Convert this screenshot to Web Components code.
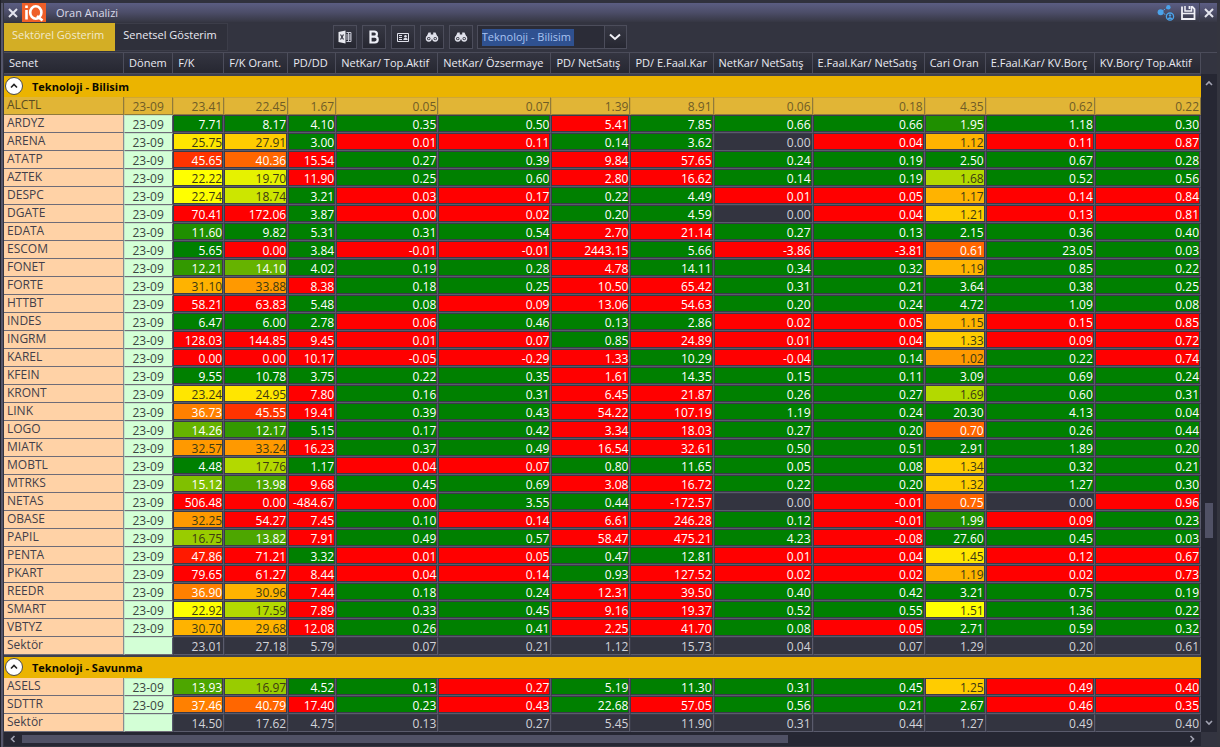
<!DOCTYPE html>
<html lang="tr">
<head>
<meta charset="utf-8">
<title>Oran Analizi</title>
<style>
  html { background: #24252f; }
  body { margin: 0; min-height: 100vh; font: 11px/16px "Open Sans", "Noto Sans", sans-serif; color: #e9eaf2; }
</style>
</head>
<body>
<app-window>
  <title-bar slot="title">Oran Analizi</title-bar>
  <tool-bar slot="tools">
    <tab-button slot="tabs" active>Sektörel Gösterim</tab-button>
    <tab-button slot="tabs">Senetsel Gösterim</tab-button>
    <icon-button icon="excel" label="Excel"></icon-button>
    <icon-button icon="bold" label="Bilanço"></icon-button>
    <icon-button icon="card" label="Kart"></icon-button>
    <icon-button icon="find" label="Ara"></icon-button>
    <icon-button icon="find" label="Sonrakini ara"></icon-button>
    <sector-select></sector-select>
  </tool-bar>
  <ratio-table></ratio-table>
  <scroll-bar slot="vertical" direction="vertical"></scroll-bar>
  <scroll-bar slot="horizontal" direction="horizontal"></scroll-bar>
</app-window>

<script>
class Base extends HTMLElement {
  connectedCallback() {
    if (this.shadowRoot) return;
    this.attachShadow({ mode: 'open' }).innerHTML =
      '<style>*{box-sizing:border-box}button{font:inherit;color:inherit;margin:0;padding:0;border:0;background:none}svg{display:block}</style>' + this.render();
  }
}

customElements.define('app-window', class extends Base {
  render() {
    return `<style>
      :host { display: block; min-height: 100vh; box-sizing: border-box; padding: 3px 3px 1px 3px; background: #34353f; border-left: 1px solid #20212a; border-bottom: 1px solid #55566a; box-shadow: inset 0 3px #30313d, inset 2px 0 #55566a; }
      .grid { display: grid; grid-template-columns: minmax(0, 1fr) 16px; border-top: 1px solid #4b4c5a; background: #333440; }
      .v { background: #262733; margin-top: 21px; display: grid; }
      .h { background: #262733; }
    </style>
    <slot name="title"></slot><slot name="tools"></slot>
    <div class="grid"><main><slot></slot></main><div class="v"><slot name="vertical"></slot></div><div class="h"><slot name="horizontal"></slot></div></div>`;
  }
});

customElements.define('title-bar', class extends Base {
  render() {
    return `<style>
      :host { display: flex; align-items: center; height: 19px; background: linear-gradient(#5b5d83, #4c4d68 50%, #363743); color: #d9dae8; }
      .x { width: 18px; height: 19px; display: grid; place-items: center; }
      .logo { width: 24px; height: 19px; margin-right: 10px; background: #ee5f28; }
      .name { flex: 1; }
      .r { width: 22px; height: 19px; display: grid; place-items: center; }
      .end { border-left: 1px solid #3c3d4f; width: 18px; }
    </style>
    <button class="x" aria-label="Kapat"><svg width="10" height="10" viewBox="0 0 10 10" stroke="#e4e5ee" stroke-width="2"><path d="M1 1l8 8M9 1L1 9"/></svg></button>
    <svg class="logo" viewBox="0 0 24 19" fill="none" stroke="#fff" stroke-width="2.6"><path d="M4.500 7v9.500M4.500 2.500v2.600"/><ellipse cx="13.800" cy="9.500" rx="5.600" ry="6.200"/><path d="M15 13l5.500 4.500"/></svg>
    <span class="name"><slot></slot></span>
    <button class="r" aria-label="Paylaş"><svg width="18" height="18" viewBox="0 0 18 18" fill="#4ba3ea"><path d="M4 8l7-5M4 8l7 4" stroke="#4ba3ea" stroke-dasharray="2 1"/><circle cx="3.6" cy="8.2" r="3"/><circle cx="11.4" cy="3.2" r="2.2"/><circle cx="13" cy="12.6" r="3.6" fill="#3d4058" stroke="#4ba3ea" stroke-width="1.3"/><circle cx="13" cy="11.4" r="1.2"/><path d="M10.6 15c.3-2.4 4.5-2.4 4.8 0z"/></svg></button>
    <button class="r" aria-label="Kaydet"><svg width="16" height="16" viewBox="0 0 16 16" fill="none" stroke="#f0f0f6" stroke-width="1.8"><path d="M2 1.500V14h12.500V4L12 1.500"/><path d="M2 8.500h12.500" stroke-width="1.500"/><path d="M5 1v5h6.500V1" stroke-width="1.500"/><path d="M9.500 1v3"/></svg></button>
    <button class="x end" aria-label="Pencereyi kapat"><svg width="10" height="10" viewBox="0 0 10 10" stroke="#e4e5ee" stroke-width="2"><path d="M1 1l8 8M9 1L1 9"/></svg></button>`;
  }
});

customElements.define('tool-bar', class extends Base {
  render() {
    return `<style>
      :host { display: flex; align-items: flex-start; height: 30px; background: #333440; }
      nav { display: flex; margin-right: 105px; padding-top: 1px; }
      .tools { display: flex; gap: 5px; padding-top: 3px; }
      ::slotted(sector-select) { margin-left: -1px; }
    </style><nav><slot name="tabs"></slot></nav><div class="tools"><slot></slot></div>`;
  }
});

customElements.define('tab-button', class extends Base {
  render() {
    return `<style>
      :host { display: block; }
      button { height: 28px; padding: 0 10px 4px 8px; white-space: nowrap; background: #2f303b; border: 1px solid #3c3d49; border-left: 0; }
      :host([active]) button { background: #d3ae25; border-color: #d3ae25; color: #f1e9cc; }
    </style><button><slot></slot></button>`;
  }
});

const ICONS = {
  excel: '<path d="M1.500 3l7-1.500v13l-7-1.500z" fill="#e8e9f0"/><path d="M9.500 3.500h4.500v9H9.500M11.500 3.500v9M9 6h5M9 8h5M9 10h5" fill="none" stroke="#c9cad6"/><path d="M3.500 5.500l3 5M6.500 5.500l-3 5" stroke="#333440" stroke-width="1.2"/>',
  bold: '<path d="M4.500 2.500h3.800a2.600 2.600 0 010 5.200H4.500zM4.500 7.700h4.300a2.900 2.900 0 010 5.800H4.500z" fill="none" stroke="#eef0f8" stroke-width="2.2"/>',
  card: '<path d="M2.500 4.500h11v8h-11z" fill="none" stroke="#dfe0ea"/><path d="M4 6.500h3M4 8.500h3M4 10.500h3" stroke="#dfe0ea"/><circle cx="10.500" cy="7.300" r="1.300" fill="#dfe0ea"/><path d="M8.300 11c0-3 4.400-3 4.400 0z" fill="#dfe0ea"/>',
  find: '<path d="M4.500 3.500h2.300v2h2.400v-2h2.300l2.500 5.500H2z" fill="#dfe0ea"/><circle cx="4.800" cy="9.600" r="2.400" fill="#2c2d38" stroke="#dfe0ea" stroke-width="1.400"/><circle cx="11.200" cy="9.600" r="2.400" fill="#2c2d38" stroke="#dfe0ea" stroke-width="1.400"/><path d="M7 7h2v3H7z" fill="#dfe0ea"/><circle cx="4.800" cy="9.600" r=".9" fill="#dfe0ea"/><circle cx="11.200" cy="9.600" r=".9" fill="#dfe0ea"/>'
};
customElements.define('icon-button', class extends Base {
  render() {
    return `<style>
      :host { display: block; }
      button { width: 24px; height: 24px; display: grid; place-items: center; border: 1px solid #4c4d5b; background: linear-gradient(#363743, #262731); }
    </style><button aria-label="${this.getAttribute('label')}"><svg width="16" height="16" viewBox="0 0 16 16">${ICONS[this.getAttribute('icon')]}</svg></button>`;
  }
});

customElements.define('sector-select', class extends Base {
  render() {
    return `<style>
      :host { display: block; }
      .box { display: grid; grid-template-columns: minmax(0, 1fr) 22px; width: 150px; height: 24px; border: 1px solid #4c4d5b; background: #2b2c37; }
      select { grid-area: 1 / 1 / 2 / 3; appearance: none; border: 0; outline: 0; margin: 0; padding: 0 4px; font: inherit; color: #a9c3f0; background: linear-gradient(#2f5190, #2f5190) 4px 3px / 92px 17px no-repeat; }
      option { background: #2b2c37; }
      .arrow { grid-area: 1 / 2; display: grid; place-items: center; border-left: 1px solid #4c4d5b; background: linear-gradient(#363743, #262731); pointer-events: none; }
    </style><div class="box"><select aria-label="Sektör"><option>Teknoloji - Bilisim</option><option>Teknoloji - Savunma</option></select>
    <span class="arrow"><svg width="12" height="8" viewBox="0 0 12 8" fill="none" stroke="#f0f0f6" stroke-width="2"><path d="M1 1.500l5 4.500 5-4.500"/></svg></span></div>`;
  }
});

customElements.define('scroll-bar', class extends Base {
  render() {
    const ch = d => `<svg width="8" height="8" viewBox="0 0 8 8" fill="none" stroke="#a2a3b2" stroke-width="1.6"><path d="${d}"/></svg>`;
    const v = this.getAttribute('direction') === 'vertical';
    return `<style>
      :host { display: flex; background: #262733; }
      :host([direction=vertical]) { flex-direction: column; }
      button { display: grid; place-items: center; width: 18px; height: 14px; }
      :host([direction=vertical]) button { width: 16px; height: 18px; }
      .track { flex: 1; display: flex; padding: 3px 0; }
      .thumb { width: 66%; height: 8px; background: #505165; }
      :host([direction=vertical]) .track { flex-direction: column; padding: 0 4px; }
      :host([direction=vertical]) .thumb { width: 8px; height: 35px; }
      .before { flex: ${v ? 70 : 0}; } .after { flex: ${v ? 30 : 1}; }
    </style><button aria-label="Geri">${ch(v ? 'M1 6l3-3 3 3' : 'M5.500 1l-3 3 3 3')}</button>
    <div class="track"><i class="before"></i><i class="thumb"></i><i class="after"></i></div>
    <button aria-label="İleri">${ch(v ? 'M1 2l3 3 3-3' : 'M2.500 1l3 3-3 3')}</button>`;
  }
});

const COLUMNS = [['Senet', 120], ['Dönem', 49], ['F/K', 51], ['F/K Orant.', 64], ['PD/DD', 48], ['NetKar/ Top.Aktif', 102], ['NetKar/ Özsermaye', 113], ['PD/ NetSatış', 79], ['PD/ E.Faal.Kar', 83], ['NetKar/ NetSatış', 99], ['E.Faal.Kar/ NetSatış', 112], ['Cari Oran', 61], ['E.Faal.Kar/ KV.Borç', 109], ['KV.Borç/ Top.Aktif', 106]];

/* A trailing "r" marks a ratio on the bad side of its sector, "n" one with no rating. */
const GROUPS = [
['Teknoloji - Bilisim', `ALCTL 23.41 22.45 1.67 0.05 0.07 1.39 8.91 0.06 0.18 4.35 0.62 0.22
ARDYZ 7.71 8.17 4.10 0.35 0.50 5.41r 7.85 0.66 0.66 1.95 1.18 0.30
ARENA 25.75 27.91 3.00 0.01r 0.11r 0.14 3.62 0.00n 0.04r 1.12 0.11r 0.87r
ATATP 45.65 40.36 15.54r 0.27 0.39 9.84r 57.65r 0.24 0.19 2.50 0.67 0.28
AZTEK 22.22 19.70 11.90r 0.25 0.60 2.80r 16.62r 0.14 0.19 1.68 0.52 0.56
DESPC 22.74 18.74 3.21 0.03r 0.17r 0.22 4.49 0.01r 0.05r 1.17 0.14r 0.84r
DGATE 70.41 172.06 3.87 0.00r 0.02r 0.20 4.59 0.00n 0.04r 1.21 0.13r 0.81r
EDATA 11.60 9.82 5.31 0.31 0.54 2.70r 21.14r 0.27 0.13 2.15 0.36 0.40
ESCOM 5.65 0.00 3.84 -0.01r -0.01r 2443.15r 5.66 -3.86r -3.81r 0.61 23.05 0.03
FONET 12.21 14.10 4.02 0.19 0.28 4.78r 14.11 0.34 0.32 1.19 0.85 0.22
FORTE 31.10 33.88 8.38r 0.18 0.25 10.50r 65.42r 0.31 0.21 3.64 0.38 0.25
HTTBT 58.21 63.83 5.48 0.08 0.09r 13.06r 54.63r 0.20 0.24 4.72 1.09 0.08
INDES 6.47 6.00 2.78 0.06r 0.46 0.13 2.86 0.02r 0.05r 1.15 0.15r 0.85r
INGRM 128.03 144.85 9.45r 0.01r 0.07r 0.85 24.89r 0.01r 0.04r 1.33 0.09r 0.72r
KAREL 0.00 0.00 10.17r -0.05r -0.29r 1.33r 10.29 -0.04r 0.14 1.02 0.22 0.74r
KFEIN 9.55 10.78 3.75 0.22 0.35 1.61r 14.35 0.15 0.11 3.09 0.69 0.24
KRONT 23.24 24.95 7.80r 0.16 0.31 6.45r 21.87r 0.26 0.27 1.69 0.60 0.31
LINK 36.73 45.55 19.41r 0.39 0.43 54.22r 107.19r 1.19 0.24 20.30 4.13 0.04
LOGO 14.26 12.17 5.15 0.17 0.42 3.34r 18.03r 0.27 0.20 0.70 0.26 0.44
MIATK 32.57 33.24 16.23r 0.37 0.49 16.54r 32.61r 0.50 0.51 2.91 1.89 0.20
MOBTL 4.48 17.76 1.17 0.04r 0.07r 0.80 11.65 0.05 0.08 1.34 0.32 0.21
MTRKS 15.12 13.98 9.68r 0.45 0.69 3.08r 16.72r 0.22 0.20 1.32 1.27 0.30
NETAS 506.48 0.00 -484.67r 0.00r 3.55 0.44 -172.57r 0.00n -0.01r 0.75 0.00n 0.96r
OBASE 32.25 54.27 7.45r 0.10 0.14r 6.61r 246.28r 0.12 -0.01r 1.99 0.09r 0.23
PAPIL 16.75 13.82 7.91r 0.49 0.57 58.47r 475.21r 4.23 -0.08r 27.60 0.45 0.03
PENTA 47.86 71.21 3.32 0.01r 0.05r 0.47 12.81 0.01r 0.04r 1.45 0.12r 0.67r
PKART 79.65 61.27 8.44r 0.04r 0.14r 0.93 127.52r 0.02r 0.02r 1.19 0.02r 0.73r
REEDR 36.90 30.96 7.44r 0.18 0.24 12.31r 39.50r 0.40 0.42 3.21 0.75 0.19
SMART 22.92 17.59 7.89r 0.33 0.45 9.16r 19.37r 0.52 0.55 1.51 1.36 0.22
VBTYZ 30.70 29.68 12.08r 0.26 0.41 2.25r 41.70r 0.08 0.05r 2.71 0.59 0.32
Sektör 23.01 27.18 5.79 0.07 0.21 1.12 15.73 0.04 0.07 1.29 0.20 0.61`],
['Teknoloji - Savunma', `ASELS 13.93 16.97 4.52 0.13 0.27r 5.19 11.30 0.31 0.45 1.25 0.49r 0.40r
SDTTR 37.46 40.79 17.40r 0.23 0.43r 22.68 57.05r 0.56 0.21 2.67 0.46r 0.35r
Sektör 14.50 17.62 4.75 0.13 0.27 5.45 11.90 0.31 0.44 1.27 0.49 0.40`]];

/* [upper limit, fill, dark text?] */
const PE = [[.01, '#ff0000'], [11, '#008000'], [12, '#1f8f00'], [12.2, '#339900'], [13, '#339900'], [14, '#4da600'], [15, '#66b300'], [16, '#80c000'], [17, '#99cc00', 1], [18, '#b3d900', 1], [19, '#cce600', 1], [20, '#e6f200', 1], [23, '#ffff00', 1], [26, '#ffe600', 1], [28, '#ffcc00', 1], [32, '#ffb300', 1], [35, '#ff9900', 1], [40, '#ff8000'], [43, '#ff6600'], [46, '#ff3300'], [48, '#ff1a00'], [1e9, '#ff0000']];
const CURRENT = [[.8, '#ff6600'], [1.1, '#ff9900', 1], [1.2, '#ffb300', 1], [1.4, '#ffcc00', 1], [1.5, '#ffe600', 1], [1.6, '#ffff00', 1], [1.8, '#b3d900', 1], [2, '#1f8f00'], [1e9, '#008000']];

customElements.define('ratio-table', class extends Base {
  cell(token, i) {
    const value = token.replace(/[rn]$/, ''), scale = i < 2 ? PE : i === 9 ? CURRENT : null;
    if (scale) {
      const [, fill, dark] = scale.find(s => +value < s[0]);
      return `<td class="${dark ? 'dark' : 'lit'}" style="background-color:${fill}">${value}</td>`;
    }
    return `<td class="${token.endsWith('n') ? '' : token.endsWith('r') ? 'lit bad' : 'lit good'}">${value}</td>`;
  }
  render() {
    const body = GROUPS.map(([name, text]) => `<tbody><tr class="group"><th colspan="14" scope="rowgroup"><span><button aria-label="Daralt" aria-expanded="true"><svg width="8" height="8" viewBox="0 0 8 8" fill="none" stroke="#222" stroke-width="1.6"><path d="M1 5.500l3-3 3 3"/></svg></button>${name}</span></th></tr>` +
      text.split('\n').map(line => {
        const [code, ...vals] = line.split(' '), sum = code === 'Sektör';
        return `<tr class="${code === 'ALCTL' ? 'selected' : ''}"><th scope="row">${code}</th><td class="term">${sum ? '' : '23-09'}</td>${vals.map((v, i) => sum || code === 'ALCTL' ? `<td>${v}</td>` : this.cell(v, i)).join('')}</tr>`;
      }).join('') + '</tbody>').join('');
    return `<style>
      :host { display: block; }
      table { width: 100%; table-layout: fixed; border-collapse: separate; border-spacing: 0; }
      th, td { padding: 0; font-weight: 400; white-space: nowrap; overflow: hidden; line-height: 15px; }
      thead th { height: 21px; padding-left: 5px; text-align: left; line-height: 18px; background: linear-gradient(#343541, #262731); border-right: 1px solid #4c4d5b; border-bottom: 1px solid #4c4d5b; overflow: visible; }
      tr { height: 18px; }
      tbody td { height: 18px; padding: 1px 1px 0 0; font-size: 12px; text-align: right; vertical-align: top; background: #333440; background-clip: padding-box; border: 1px solid #3a3b49; border-right-color: #5a5b6c; border-bottom-color: #5a5b6c; color: #d2d3da; }
      td.lit { color: #fff; } td.dark { color: #3d3a12; }
      td.lit, td.dark { box-shadow: inset -1px -1px #3a3b49; }
      td.good { background-color: #008000; } td.bad { background-color: #ff0000; }
      tbody th { height: 18px; padding: 0 0 2px 3px; font-size: 12px; text-align: left; vertical-align: top; background: #ffd2a6; color: #423e4a; font-weight: 500; border-bottom: 1px solid #6e6c78; border-right: 1px solid #8a8b90; }
      tbody td.term { text-align: center; background: #d3ffd6; color: #3b4540; border-color: #bfe6c6; border-right-color: #55566a; border-bottom-color: #6e6c78; }
      tr.selected th, tr.selected td, tr.selected td.term { background: #e1b536; color: #6f5c26; border-color: #cfa634; border-right-color: #8f7a3c; border-bottom-color: #8f7a3c; }
      tr.selected th { border-width: 0 1px 1px 0; color: #5c4c20; }
      tbody .group th { height: 23px; padding: 1px 0 0 1px; font-size: 11px; background: #ebb400; background-clip: padding-box; color: #0c0a00; font-weight: 700; border: 0; border-top: 2px solid #3f404d; }
      .group span { display: flex; align-items: center; gap: 9px; }
      .group button { width: 18px; height: 18px; border-radius: 50%; display: grid; place-items: center; background: #fff; border: 1px solid #4a4a4a; }
    </style>
    <table><colgroup>${COLUMNS.map(c => `<col style="width:${c[1]}px">`).join('')}</colgroup>
    <thead><tr>${COLUMNS.map(c => `<th scope="col">${c[0]}</th>`).join('')}</tr></thead>${body}</table>`;
  }
});
</script>
</body>
</html>
